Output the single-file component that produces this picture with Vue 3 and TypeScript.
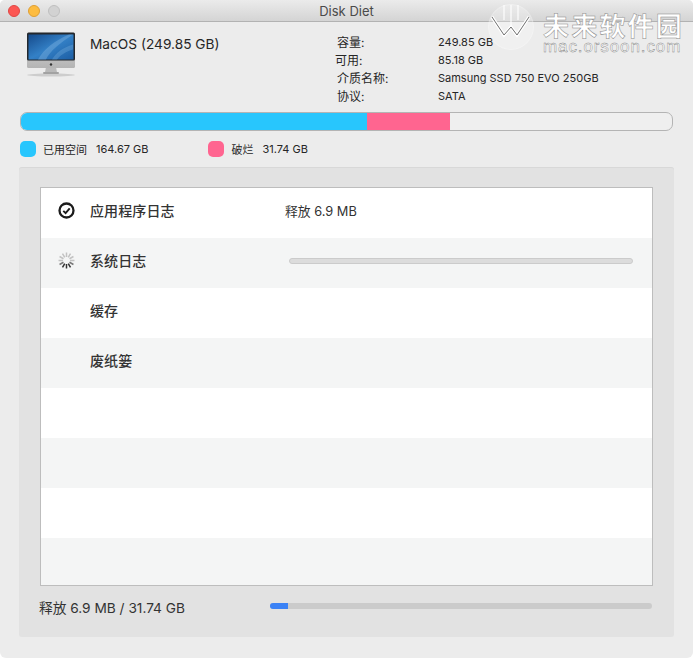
<script setup lang="ts">
const info = [
  { k: '容量:', v: '249.85 GB', off: false },
  { k: '可用:', v: '85.18 GB', off: true },
  { k: '介质名称:', v: 'Samsung SSD 750 EVO 250GB', off: false },
  { k: '协议:', v: 'SATA', off: false },
]
const rows = [
  { name: '应用程序日志', state: 'done' },
  { name: '系统日志', state: 'busy' },
  { name: '缓存', state: '' },
  { name: '废纸篓', state: '' },
  { name: '', state: '' },
  { name: '', state: '' },
  { name: '', state: '' },
  { name: '', state: '' },
]
const spokes = Array.from({ length: 12 }, (_, i) => i)
</script>

<template>
  <div class="win">
    <div class="titlebar">
      <div class="lights">
        <span class="light red"></span>
        <span class="light yellow"></span>
        <span class="light gray"></span>
      </div>
      <span class="title">Disk Diet</span>
    </div>

    <div class="head">
      <svg class="imac" width="50" height="46" viewBox="0 0 50 46">
        <defs>
          <linearGradient id="scr" x1="0" y1="0" x2="1" y2="1">
            <stop offset="0" stop-color="#164b8c" />
            <stop offset="0.5" stop-color="#3380c6" />
            <stop offset="1" stop-color="#1d5ea4" />
          </linearGradient>
          <linearGradient id="chin" x1="0" y1="0" x2="0" y2="1">
            <stop offset="0" stop-color="#dcdcdc" />
            <stop offset="1" stop-color="#b4b4b4" />
          </linearGradient>
        </defs>
        <ellipse cx="25" cy="44" rx="24" ry="1.5" fill="#cdcdcd" />
        <path d="M20 36h10l1 5.5h-12z" fill="#b9b9b9" />
        <rect x="17" y="41" width="16" height="2" rx="1" fill="#a2a2a2" />
        <rect x="1" y="1.5" width="48" height="35.5" rx="1.5" fill="url(#chin)" />
        <rect x="1" y="1.5" width="48" height="28" rx="1.5" fill="#24282d" />
        <rect x="2.5" y="3.5" width="45" height="25" fill="url(#scr)" />
        <path d="M12 28.5C18 18 28 10 43 3.5h4C34 12 24 20 20 28.5z" fill="#7ab0de" opacity=".45" />
        <path d="M26 28.5c4-7 11-12 21-15v5c-7 2-12 5-16 10z" fill="#86bae6" opacity=".3" />
        <circle cx="25" cy="33.5" r="1.2" fill="#333" />
      </svg>
      <div class="disk-name">MacOS (249.85 GB)</div>
      <div class="info">
        <template v-for="item in info" :key="item.k">
          <span class="info-k" :class="{ nudge: item.off }">{{ item.k }}</span>
          <span class="info-v">{{ item.v }}</span>
        </template>
      </div>
    </div>

    <div class="bar">
      <div class="bar-used"></div>
      <div class="bar-junk"></div>
    </div>

    <div class="legend">
      <span class="dot cyan"></span>
      <span class="leg-k">已用空间</span>
      <span class="leg-v leg-v-a">164.67 GB</span>
      <span class="dot pink"></span>
      <span class="leg-k">破烂</span>
      <span class="leg-v">31.74 GB</span>
    </div>

    <div class="panel">
      <div class="table">
        <div v-for="(r, i) in rows" :key="i" class="row" :class="{ alt: i % 2 === 1 }">
          <span class="status">
            <svg v-if="r.state === 'done'" width="17" height="17" viewBox="0 0 17 17">
              <circle cx="8.5" cy="8.5" r="7" fill="none" stroke="#1c1c1c" stroke-width="2.3" />
              <path d="M5.3 8.8l2.3 2.3 4.1-4.8" fill="none" stroke="#1c1c1c" stroke-width="1.9" />
            </svg>
            <svg v-else-if="r.state === 'busy'" width="17" height="17" viewBox="0 0 17 17">
              <line
                v-for="s in spokes"
                :key="s"
                x1="8.5"
                y1="0.5"
                x2="8.5"
                y2="5"
                stroke-width="1.5"
                :stroke="s >= 5 && s <= 7 ? '#333' : s === 4 || s === 8 ? '#777' : '#c2c2c2'"
                :transform="`rotate(${s * 30} 8.5 8.5)`"
              />
            </svg>
          </span>
          <span class="row-name">{{ r.name }}</span>
          <span v-if="r.state === 'done'" class="row-msg">释放 6.9 MB</span>
          <span v-if="r.state === 'busy'" class="row-track"></span>
        </div>
      </div>
      <div class="foot">
        <span class="foot-text">释放 6.9 MB / 31.74 GB</span>
        <div class="foot-track"><div class="foot-fill"></div></div>
      </div>
    </div>

    <div class="mark" aria-hidden="true">
      <svg class="mark-logo" width="48" height="48" viewBox="0 0 48 48">
        <circle cx="24" cy="24" r="22.5" fill="#fff" fill-opacity=".24" stroke="#fff" stroke-opacity=".35" />
        <path d="M17 2v15M31 2v15M24 2v20" stroke="#fff" stroke-width="1.6" fill="none" opacity=".7" />
        <path d="M5 14l12 18 7-8 6 8 12-18" fill="none" stroke="#fff" stroke-width="3.2" />
        <path d="M5 14l12 18 7-8 6 8 12-18" fill="none" stroke="#6f6f6f" stroke-width="1" />
      </svg>
      <div class="mark-text">
        <span class="mark-cn">未来软件园</span>
        <span class="mark-en">mac.orsoon.com</span>
      </div>
    </div>
  </div>
</template>

<style>
html, body { margin: 0; background: #fff; }
</style>

<style scoped>
.win {
  position: relative;
  width: 693px;
  height: 658px;
  box-sizing: border-box;
  overflow: hidden;
  background: #ececec;
  border-radius: 5px 5px 6px 6px;
  font-family: Inter, "Noto Sans CJK SC", sans-serif;
  color: #262626;
}
.titlebar {
  position: relative;
  height: 22px;
  box-sizing: border-box;
  display: flex;
  align-items: center;
  justify-content: center;
  background: linear-gradient(#ebebeb, #d4d4d4);
  border-bottom: 1px solid #b2b2b2;
}
.lights {
  position: absolute;
  left: 8px;
  top: 5px;
  display: flex;
  gap: 8px;
}
.light {
  width: 12px;
  height: 12px;
  box-sizing: border-box;
  border-radius: 50%;
  border: 1px solid transparent;
}
.red { background: #fc5753; border-color: #df4744; }
.yellow { background: #fdbc40; border-color: #de9f34; }
.gray { background: #d2d2d2; border-color: #bfbfbf; }
.title { font-size: 13px; color: #4a4a4a; }

.head {
  display: flex;
  height: 90px;
}
.imac { margin: 9px 0 0 26px; flex: none; }
.disk-name {
  margin: 14px 0 0 14px;
  width: 247px;
  font-size: 13.7px;
  line-height: 16px;
  flex: none;
}
.info {
  display: grid;
  grid-template-columns: 101px auto;
  grid-auto-rows: 18px;
  margin-top: 12px;
  align-content: start;
}
.info-k { font-size: 12px; line-height: 18px; box-sizing: border-box; }
.info-k.nudge { margin-left: -2px; }
.info-v { font-size: 11px; line-height: 16px; }

.bar {
  margin: 0 20px;
  height: 19px;
  display: flex;
  box-sizing: border-box;
  border: 1px solid #b4b4b4;
  border-radius: 7px;
  overflow: hidden;
  background: #efefef;
}
.bar-used { width: 347px; margin: -1px 0 -1px -1px; background: #28c6fd; }
.bar-junk { width: 83px; margin: -1px 0; background: #ff6590; }

.legend {
  display: flex;
  align-items: center;
  height: 19px;
  margin: 8px 0 0 20px;
  font-size: 11px;
}
.dot { width: 16px; height: 16px; border-radius: 5px; flex: none; }
.cyan { background: #28c6fd; }
.pink { background: #ff6590; }
.leg-k { margin: 0 9px 0 7px; }
.leg-v-a { margin-right: 60px; }

.panel {
  margin: 9px 19px 0;
  height: 470px;
  box-sizing: border-box;
  padding: 20px 21px 0;
  background: #e2e2e2;
  border-radius: 3px;
  box-shadow: inset 0 1px 0 #d8d8d8;
}
.table {
  height: 399px;
  box-sizing: border-box;
  border: 1px solid #bdbdbd;
  overflow: hidden;
  background: #f4f5f5;
}
.row {
  height: 50px;
  box-sizing: border-box;
  padding-bottom: 6px;
  display: flex;
  align-items: center;
  background: #fff;
}
.row.alt { background: #f4f5f5; }
.status {
  width: 17px;
  height: 17px;
  margin-left: 17px;
  flex: none;
  display: flex;
}
.row-name {
  width: 195px;
  margin-left: 15px;
  flex: none;
  font-size: 14px;
  font-weight: 500;
  letter-spacing: 0.1px;
  color: #333;
}
.row-msg { font-size: 12.8px; color: #333; }
.row-track {
  width: 344px;
  height: 6px;
  margin: 2px 0 0 4px;
  box-sizing: border-box;
  border-radius: 3px;
  background: #dcdcdc;
  border: 1px solid #cbcbcb;
}
.foot {
  display: flex;
  align-items: center;
  height: 42px;
  padding-bottom: 1px;
  box-sizing: border-box;
}
.foot-text {
  width: 231px;
  margin-left: -1px;
  flex: none;
  font-size: 13.7px;
  color: #333;
}
.foot-track {
  width: 382px;
  height: 6px;
  margin-top: -2px;
  border-radius: 3px;
  background: #cbcbcb;
  overflow: hidden;
}
.foot-fill {
  width: 18px;
  height: 100%;
  background: #3b82f6;
}

.mark {
  position: absolute;
  left: 487px;
  top: 3px;
  display: flex;
  gap: 8px;
  pointer-events: none;
}
.mark-logo { flex: none; }
.mark-text { display: flex; flex-direction: column; margin-top: 9px; }
.mark-cn {
  font-family: "Noto Sans CJK SC", sans-serif;
  font-size: 26px;
  line-height: 26px;
  letter-spacing: 2.2px;
  font-weight: 700;
  color: #fff;
  -webkit-text-stroke: 0.5px #8a8a8a;
}
.mark-en {
  font-family: "Liberation Sans", sans-serif;
  font-size: 17px;
  line-height: 17px;
  letter-spacing: 0.9px;
  color: #fff;
  -webkit-text-stroke: 0.4px #7a7a7a;
}
</style>
